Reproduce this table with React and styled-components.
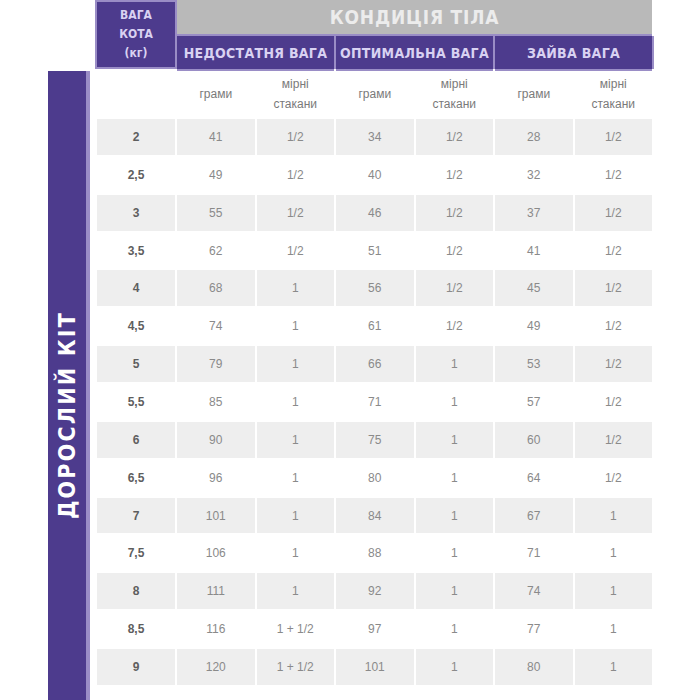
import React from "react";
import styled, { createGlobalStyle } from "styled-components";

const Global = createGlobalStyle`
  html, body { margin: 0; padding: 0; background: #ffffff; }
  body { font-family: "Liberation Sans", Arial, sans-serif; overflow: hidden; }
`;

const PURPLE = "#4d3b8d";
const LAVENDER = "#9a8dc6";
const CONDENSED = `"Liberation Sans Narrow", "DejaVu Sans Condensed", "Liberation Sans", sans-serif`;

const Page = styled.div`
  width: 700px;
  height: 700px;
  overflow: hidden;
  padding-left: 48px;
  box-sizing: border-box;
`;

const Table = styled.div`
  display: grid;
  width: 604px;
  grid-template-columns: 47px 78px repeat(6, 1fr);
  grid-template-rows: 34px 33px 46px;
  grid-auto-rows: 35.86px;
  gap: 2px;
`;

const SideBar = styled.div`
  grid-column: 1;
  grid-row: 3 / span 17;
  width: 42px;
  background: ${PURPLE};
  border-right: 4px solid ${LAVENDER};
  box-sizing: border-box;
  display: flex;
  align-items: flex-start;
  justify-content: center;
  padding-top: 240px;
`;

const SideLabel = styled.div`
  writing-mode: vertical-rl;
  transform: rotate(180deg);
  color: #ffffff;
  font-family: ${CONDENSED};
  font-weight: 700;
  font-size: 23px;
  letter-spacing: 2.2px;
  white-space: nowrap;
`;

const CornerCell = styled.div`
  grid-column: 2;
  grid-row: 1 / span 2;
  background: ${PURPLE};
  border: 2px solid ${LAVENDER};
  margin: 0 -2px 0 -2px;
  box-sizing: border-box;
  display: flex;
  flex-direction: column;
  align-items: center;
  justify-content: center;
  color: #d9d2f2;
  font-family: ${CONDENSED};
  font-weight: 700;
  font-size: 12px;
  line-height: 19px;
`;

const TitleCell = styled.div`
  grid-column: 3 / span 6;
  grid-row: 1;
  background: #b9b9b9;
  box-shadow: 0 2px 0 ${LAVENDER};
  display: flex;
  align-items: center;
  justify-content: center;
  color: #ececec;
  font-family: ${CONDENSED};
  font-weight: 700;
  font-size: 19px;
  letter-spacing: 0.8px;
`;

const GroupCell = styled.div`
  grid-column: ${(p) => p.$col} / span 2;
  grid-row: 2;
  background: ${PURPLE};
  box-shadow: 2px 0 0 ${LAVENDER}, 0 2px 0 ${LAVENDER};
  display: flex;
  align-items: center;
  justify-content: center;
  color: #d9d2f2;
  font-family: ${CONDENSED};
  font-weight: 700;
  font-size: 14px;
  letter-spacing: 0.3px;
  white-space: nowrap;
`;

const UnitCell = styled.div`
  grid-row: 3;
  grid-column: ${(p) => p.$col};
  display: flex;
  align-items: center;
  justify-content: center;
  text-align: center;
  color: #7a7a7a;
  font-size: 12px;
  line-height: 20px;
  font-family: "Liberation Sans", Arial, sans-serif;
`;

const Cell = styled.div`
  background: ${(p) => (p.$shaded ? "#eeeeee" : "#ffffff")};
  display: flex;
  align-items: center;
  justify-content: center;
  color: ${(p) => (p.$strong ? "#5e5e5e" : "#8a8a8a")};
  font-weight: ${(p) => (p.$strong ? 700 : 400)};
  font-size: 12px;
  font-family: "Liberation Sans", Arial, sans-serif;
  white-space: nowrap;
`;

const rows = [
  ["2", "41", "1/2", "34", "1/2", "28", "1/2"],
  ["2,5", "49", "1/2", "40", "1/2", "32", "1/2"],
  ["3", "55", "1/2", "46", "1/2", "37", "1/2"],
  ["3,5", "62", "1/2", "51", "1/2", "41", "1/2"],
  ["4", "68", "1", "56", "1/2", "45", "1/2"],
  ["4,5", "74", "1", "61", "1/2", "49", "1/2"],
  ["5", "79", "1", "66", "1", "53", "1/2"],
  ["5,5", "85", "1", "71", "1", "57", "1/2"],
  ["6", "90", "1", "75", "1", "60", "1/2"],
  ["6,5", "96", "1", "80", "1", "64", "1/2"],
  ["7", "101", "1", "84", "1", "67", "1"],
  ["7,5", "106", "1", "88", "1", "71", "1"],
  ["8", "111", "1", "92", "1", "74", "1"],
  ["8,5", "116", "1 + 1/2", "97", "1", "77", "1"],
  ["9", "120", "1 + 1/2", "101", "1", "80", "1"],
  ["9,5", "125", "1 + 1/2", "105", "1", "84", "1"],
];

export default function App() {
  return (
    <Page>
      <Global />
      <Table>
        <CornerCell>
          <span>ВАГА</span>
          <span>КОТА</span>
          <span>(кг)</span>
        </CornerCell>
        <TitleCell>КОНДИЦІЯ ТІЛА</TitleCell>
        <GroupCell $col={3}>НЕДОСТАТНЯ ВАГА</GroupCell>
        <GroupCell $col={5}>ОПТИМАЛЬНА ВАГА</GroupCell>
        <GroupCell $col={7}>ЗАЙВА ВАГА</GroupCell>

        <SideBar>
          <SideLabel>ДОРОСЛИЙ КІТ</SideLabel>
        </SideBar>

        <UnitCell $col={2} />
        {[0, 1, 2].map((g) => (
          <React.Fragment key={g}>
            <UnitCell $col={3 + g * 2}>грами</UnitCell>
            <UnitCell $col={4 + g * 2}>
              мірні
              <br />
              стакани
            </UnitCell>
          </React.Fragment>
        ))}

        {rows.map((r, i) =>
          r.map((v, j) => (
            <Cell
              key={`${i}-${j}`}
              $shaded={i % 2 === 0}
              $strong={j === 0}
              style={{ gridColumn: j + 2, gridRow: i + 4 }}
            >
              {v}
            </Cell>
          ))
        )}
      </Table>
    </Page>
  );
}
